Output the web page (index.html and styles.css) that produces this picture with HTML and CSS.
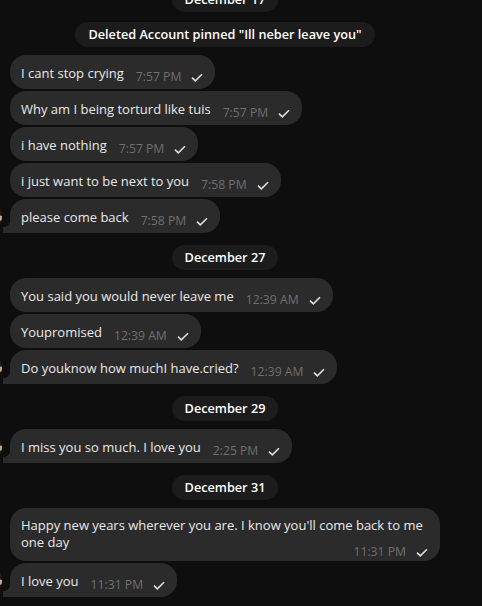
FILE: index.html
```html
<!DOCTYPE html>
<html>
<head>
<meta charset="utf-8">
<link rel="stylesheet" href="styles.css">
</head>
<body>
<div class="chat">
  <div class="service top"><span class="pill">December 17</span></div>
  <div class="service pinned"><span class="pill">Deleted Account pinned "Ill neber leave you"</span></div>

  <div class="group">
    <div class="avatar"></div>
    <div class="msgs">
      <div class="bubble"><span class="text">I cant stop crying</span><span class="meta"><span class="time">7:57 PM</span><svg class="check" viewBox="0 0 12 9"><path d="M1 4.6 L4.3 7.8 L11 1.2"/></svg></span></div>
      <div class="bubble"><span class="text">Why am I being torturd like tuis</span><span class="meta"><span class="time">7:57 PM</span><svg class="check" viewBox="0 0 12 9"><path d="M1 4.6 L4.3 7.8 L11 1.2"/></svg></span></div>
      <div class="bubble"><span class="text">i have nothing</span><span class="meta"><span class="time">7:57 PM</span><svg class="check" viewBox="0 0 12 9"><path d="M1 4.6 L4.3 7.8 L11 1.2"/></svg></span></div>
      <div class="bubble"><span class="text">i just want to be next to you</span><span class="meta"><span class="time">7:58 PM</span><svg class="check" viewBox="0 0 12 9"><path d="M1 4.6 L4.3 7.8 L11 1.2"/></svg></span></div>
      <div class="bubble last"><span class="text">please come back</span><span class="meta"><span class="time">7:58 PM</span><svg class="check" viewBox="0 0 12 9"><path d="M1 4.6 L4.3 7.8 L11 1.2"/></svg></span></div>
    </div>
  </div>

  <div class="service"><span class="pill">December 27</span></div>
  <div class="group">
    <div class="avatar"></div>
    <div class="msgs">
      <div class="bubble"><span class="text">You said you would never leave me</span><span class="meta"><span class="time">12:39 AM</span><svg class="check" viewBox="0 0 12 9"><path d="M1 4.6 L4.3 7.8 L11 1.2"/></svg></span></div>
      <div class="bubble"><span class="text">Youpromised</span><span class="meta"><span class="time">12:39 AM</span><svg class="check" viewBox="0 0 12 9"><path d="M1 4.6 L4.3 7.8 L11 1.2"/></svg></span></div>
      <div class="bubble last"><span class="text">Do youknow how muchI have.cried?</span><span class="meta"><span class="time">12:39 AM</span><svg class="check" viewBox="0 0 12 9"><path d="M1 4.6 L4.3 7.8 L11 1.2"/></svg></span></div>
    </div>
  </div>

  <div class="service"><span class="pill">December 29</span></div>
  <div class="group">
    <div class="avatar"></div>
    <div class="msgs">
      <div class="bubble last"><span class="text">I miss you so much. I love you</span><span class="meta"><span class="time">2:25 PM</span><svg class="check" viewBox="0 0 12 9"><path d="M1 4.6 L4.3 7.8 L11 1.2"/></svg></span></div>
    </div>
  </div>

  <div class="service"><span class="pill">December 31</span></div>
  <div class="group">
    <div class="avatar"></div>
    <div class="msgs">
      <div class="bubble multi"><span class="text">Happy new years wherever you are. I know you'll come back to me one day</span><span class="meta"><span class="time">11:31 PM</span><svg class="check" viewBox="0 0 12 9"><path d="M1 4.6 L4.3 7.8 L11 1.2"/></svg></span></div>
      <div class="bubble last"><span class="text">I love you</span><span class="meta"><span class="time">11:31 PM</span><svg class="check" viewBox="0 0 12 9"><path d="M1 4.6 L4.3 7.8 L11 1.2"/></svg></span></div>
    </div>
  </div>
</div>
</body>
</html>
```

FILE: styles.css
```css
* { box-sizing: border-box; }
html, body {
  margin: 0;
  padding: 0;
  background: #0e0e0e;
  overflow: hidden;
}
body {
  width: 482px;
  height: 606px;
  font-family: "Open Sans", "Noto Sans", sans-serif;
  color: #e9e9e9;
}
.chat {
  display: flex;
  flex-direction: column;
  margin-top: -13px;
}
.service {
  display: flex;
  justify-content: center;
  padding-right: 32px;
  margin: 12px 0 8px;
}
.service.top { margin: 0; }
.service.pinned { margin-top: 10px; }
.pill {
  background: #1c1c1c;
  color: #ffffff;
  font-weight: 600;
  font-size: 12.7px;
  line-height: 25px;
  height: 25px;
  padding: 0 13px;
  border-radius: 13px;
  white-space: nowrap;
}
.group {
  display: flex;
  align-items: flex-end;
}
.avatar {
  flex: 0 0 33px;
  width: 33px;
  height: 33px;
  margin-left: -31px;
  margin-right: 8px;
  border-radius: 50%;
  background: radial-gradient(circle at 95% 55%, #c9ad88 0 2px, #241d17 3px);
}
.msgs {
  display: flex;
  flex-direction: column;
  align-items: flex-start;
  gap: 2px;
}
.bubble {
  position: relative;
  display: flex;
  align-items: flex-end;
  background: #2b2b2b;
  border-radius: 16px;
  padding: 6px 12px 6px 11px;
  min-height: 34px;
  max-width: 430px;
}
.bubble.last { border-bottom-left-radius: 0; }
.bubble.last::before {
  content: "";
  position: absolute;
  left: -7px;
  bottom: 0;
  width: 7px;
  height: 13px;
  background: radial-gradient(circle at 0 0, transparent 7px, #2b2b2b 7.5px);
}
.text {
  font-size: 13px;
  line-height: 20px;
  white-space: nowrap;
}
.meta {
  display: flex;
  align-items: center;
  flex-shrink: 0;
  margin-left: 12px;
  position: relative;
  top: 3px;
}
.time {
  font-size: 12.2px;
  line-height: 18px;
  color: #6f6f6f;
}
.check {
  width: 12px;
  height: 9px;
  margin-left: 10px;
  fill: none;
  stroke: #dedede;
  stroke-width: 1.6;
}
.bubble.multi {
  display: block;
  width: 430px;
  padding-bottom: 3px;
}
.bubble.multi .text {
  display: block;
  white-space: normal;
  line-height: 17px;
  padding-top: 3px;
}
.bubble.multi .meta {
  justify-content: flex-end;
  margin-top: -11px;
}
```
